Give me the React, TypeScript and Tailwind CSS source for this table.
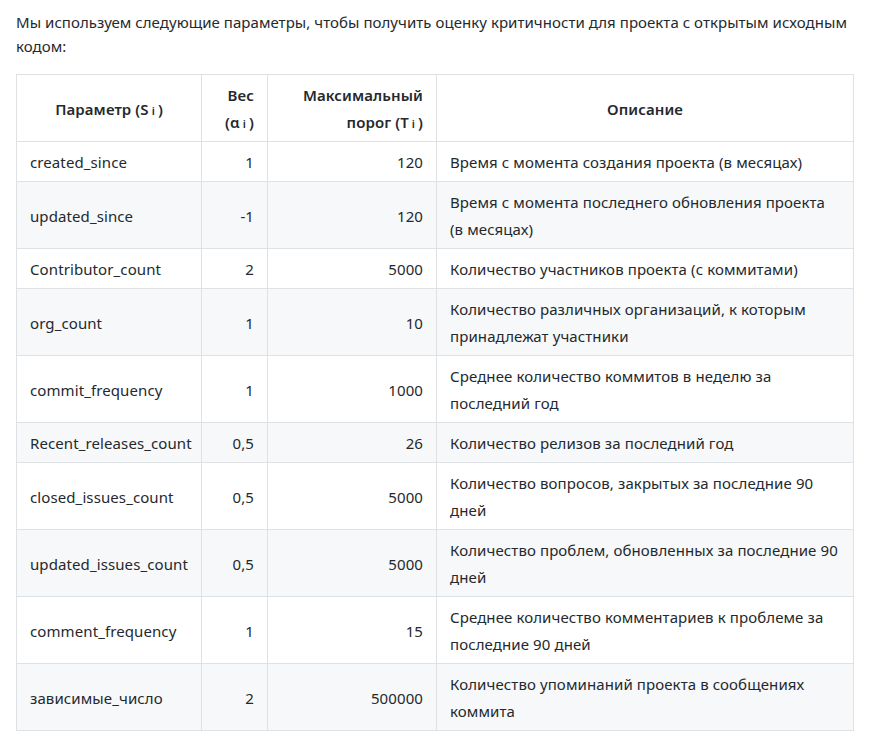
import React from "react";

const rows: [string, string, string, string][] = [
  ["created_since", "1", "120", "Время с момента создания проекта (в месяцах)"],
  ["updated_since", "-1", "120", "Время с момента последнего обновления проекта (в месяцах)"],
  ["Contributor_count", "2", "5000", "Количество участников проекта (с коммитами)"],
  ["org_count", "1", "10", "Количество различных организаций, к которым принадлежат участники"],
  ["commit_frequency", "1", "1000", "Среднее количество коммитов в неделю за последний год"],
  ["Recent_releases_count", "0,5", "26", "Количество релизов за последний год"],
  ["closed_issues_count", "0,5", "5000", "Количество вопросов, закрытых за последние 90 дней"],
  ["updated_issues_count", "0,5", "5000", "Количество проблем, обновленных за последние 90 дней"],
  ["comment_frequency", "1", "15", "Среднее количество комментариев к проблеме за последние 90 дней"],
  ["зависимые_число", "2", "500000", "Количество упоминаний проекта в сообщениях коммита"],
];

const Sub = () => <span className="text-[11px] leading-none px-[3px]">i</span>;

export default function App() {
  return (
    <div
      className="bg-white text-[#24292e] px-4 pt-[10px] text-[15px] leading-[27px] min-h-[747px] tracking-[0.1px]"
      style={{ fontFamily: '"Noto Sans", "Open Sans", sans-serif' }}
    >
      <p className="leading-[24px] mb-[16px] tracking-[0.05px]">
        Мы используем следующие параметры, чтобы получить оценку критичности для проекта с открытым исходным кодом:
      </p>
      <table className="table-fixed border-collapse w-[837px]">
        <colgroup>
          <col className="w-[185px]" />
          <col className="w-[66px]" />
          <col className="w-[169px]" />
          <col className="w-[417px]" />
        </colgroup>
        <thead>
          <tr className="h-[67px]">
            <th className="border border-[#dfe2e5] px-[13px] pt-[7px] pb-[5px] font-semibold text-center align-middle">
              Параметр (S<Sub />)
            </th>
            <th className="border border-[#dfe2e5] px-[13px] pt-[7px] pb-[5px] font-semibold text-right align-middle">
              Вес (α<Sub />)
            </th>
            <th className="border border-[#dfe2e5] px-[13px] pt-[7px] pb-[5px] font-semibold text-right align-middle">
              Максимальный порог (T<Sub />)
            </th>
            <th className="border border-[#dfe2e5] px-[13px] pt-[7px] pb-[5px] font-semibold text-center align-middle">
              Описание
            </th>
          </tr>
        </thead>
        <tbody>
          {rows.map((r, i) => (
            <tr key={i} className={i % 2 === 1 ? "bg-[#f6f8fa]" : "bg-white"}>
              <td className="border border-[#dfe2e5] px-[13px] pt-[7px] pb-[5px] align-middle">{r[0]}</td>
              <td className="border border-[#dfe2e5] px-[13px] pt-[7px] pb-[5px] align-middle text-right">{r[1]}</td>
              <td className="border border-[#dfe2e5] px-[13px] pt-[7px] pb-[5px] align-middle text-right">{r[2]}</td>
              <td className="border border-[#dfe2e5] px-[13px] pt-[7px] pb-[5px] align-middle">{r[3]}</td>
            </tr>
          ))}
        </tbody>
      </table>
    </div>
  );
}
